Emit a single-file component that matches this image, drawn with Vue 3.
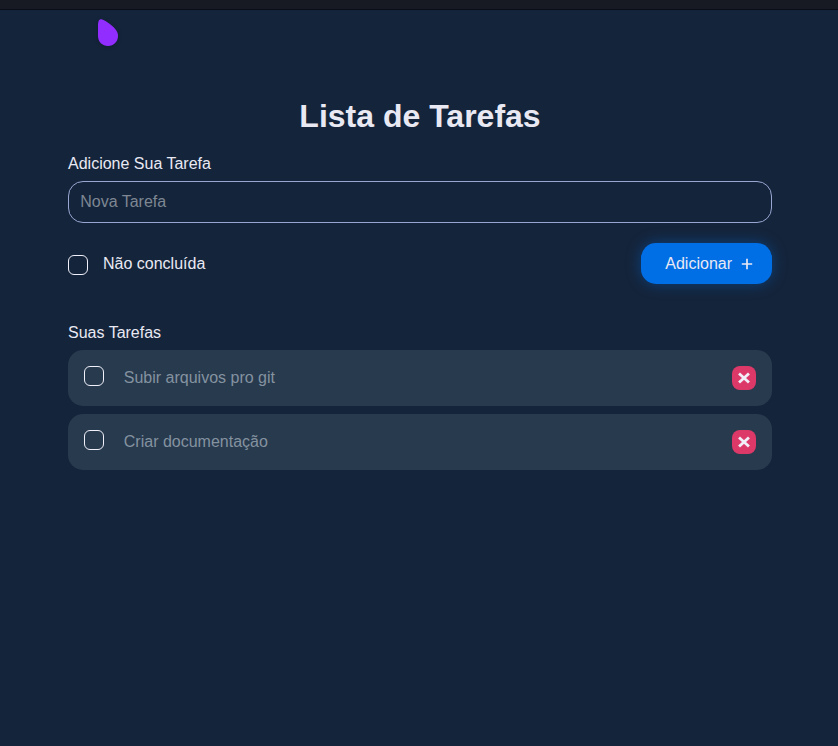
<script setup>
import { ref } from 'vue'

const newTask = ref('')
const done = ref(false)
const tasks = ref([
  { id: 1, name: 'Subir arquivos pro git', done: false },
  { id: 2, name: 'Criar documentação', done: false },
])

function addTask() {
  const name = newTask.value.trim()
  if (!name) return
  tasks.value.push({ id: Date.now(), name, done: done.value })
  newTask.value = ''
  done.value = false
}

function removeTask(id) {
  tasks.value = tasks.value.filter((task) => task.id !== id)
}
</script>

<template>
  <div class="page">
    <div class="topbar"></div>
    <header class="header">
      <svg class="logo" width="22" height="29" viewBox="0 0 22 29">
        <path d="M1 7C1.100 3 2 .6 4.500 1.300C8 2.300 14 6.200 18 10.700C20 13 21 15.100 21 17.800C21 23.800 16.800 28 11 28C5.200 28 1 23.900 1 17.800Z" fill="#912eff" />
      </svg>
    </header>
    <main class="content">
      <h1>Lista de Tarefas</h1>
      <form @submit.prevent="addTask">
        <label class="label" for="task">Adicione Sua Tarefa</label>
        <input id="task" v-model="newTask" class="field" type="text" placeholder="Nova Tarefa" />
        <div class="actions">
          <label class="status">
            <input v-model="done" class="check" type="checkbox" />
            <span>{{ done ? 'Concluída' : 'Não concluída' }}</span>
          </label>
          <button class="add" type="submit">
            <span>Adicionar</span>
            <svg width="12" height="12" viewBox="0 0 12 12">
              <path d="M6 .8V11.200M.8 6H11.200" stroke="#e9e9f4" stroke-width="1.700" fill="none" />
            </svg>
          </button>
        </div>
      </form>
      <h2 class="label">Suas Tarefas</h2>
      <ul class="list">
        <li v-for="task in tasks" :key="task.id" class="item">
          <input v-model="task.done" class="check" type="checkbox" />
          <span class="name">{{ task.name }}</span>
          <button class="remove" type="button" @click="removeTask(task.id)">
            <svg width="12" height="12" viewBox="0 0 12 12">
              <path d="M1.900 2.300L10.100 9.700M10.100 2.300L1.900 9.700" stroke="#f1eef8" stroke-width="3" stroke-linecap="square" fill="none" transform="translate(6 6) scale(.95) translate(-6 -6)" />
            </svg>
          </button>
        </li>
      </ul>
    </main>
  </div>
</template>

<style>
body {
  margin: 0;
  background: #14243a;
}
</style>

<style scoped>
.page {
  box-sizing: border-box;
  min-height: 746px;
  background: #14243a;
  color: #e9e9f4;
  font: 16px/20px "Liberation Sans", Arial, sans-serif;
}
.topbar {
  box-sizing: border-box;
  height: 10px;
  background: #171a23;
  border-bottom: 1px solid #090e18;
}
.header {
  height: 82px;
  box-sizing: border-box;
  padding: 8px 0 0 97px;
}
.logo {
  display: block;
  filter: drop-shadow(0 1px 2px rgba(0, 0, 0, 0.2));
}
.content {
  width: 704px;
  margin-left: 68px;
}
h1 {
  margin: 0;
  padding-top: 4px;
  height: 57px;
  font-size: 32px;
  line-height: 40px;
  text-align: center;
}
.label {
  display: block;
  margin: 0;
  font-size: 16px;
  font-weight: 400;
}
h1 + form {
  padding-top: 1px;
}
.field {
  box-sizing: border-box;
  display: block;
  width: 100%;
  height: 42px;
  margin: 7px 0 20px;
  padding: 0 11.200px;
  border: 1px solid #98a7d2;
  border-radius: 15px;
  outline: none;
  background: transparent;
  color: inherit;
  font: inherit;
}
.field::placeholder {
  color: #7e8793;
  opacity: 1;
}
.actions {
  display: flex;
  align-items: center;
  justify-content: space-between;
  height: 41px;
  margin-bottom: 39px;
}
.status {
  display: flex;
  align-items: center;
  gap: 15px;
}
.status .check {
  margin-top: 3px;
}
.check {
  appearance: none;
  box-sizing: border-box;
  flex: none;
  width: 20px;
  height: 20px;
  margin: 0;
  border: 1px solid #f0f0fa;
  border-radius: 6px;
}
.check:checked {
  background: #006fe6;
}
.add {
  display: flex;
  align-items: center;
  gap: 9px;
  height: 41px;
  width: 131px;
  padding: 0 0 0 24.300px;
  border: 0;
  border-radius: 15px;
  background: #006fe6;
  box-shadow: 0 0 15px rgba(0, 111, 230, 0.4);
  color: #e9e9f4;
  font: inherit;
}
.add svg {
  margin-top: 1px;
}
.list {
  display: grid;
  gap: 8px;
  margin: 7px 0 0;
  padding: 0;
  list-style: none;
}
.item {
  box-sizing: border-box;
  display: flex;
  align-items: center;
  height: 56px;
  padding: 0 16px;
  border-radius: 15px;
  background: #283a4e;
}
.item .check {
  margin-bottom: 4px;
}
.name {
  flex: 1;
  margin-left: 19.800px;
  color: #8492a0;
}
.remove {
  display: flex;
  align-items: center;
  justify-content: center;
  width: 24px;
  height: 24px;
  padding: 0;
  border: 0;
  border-radius: 8px;
  background: #dc3969;
}
</style>
